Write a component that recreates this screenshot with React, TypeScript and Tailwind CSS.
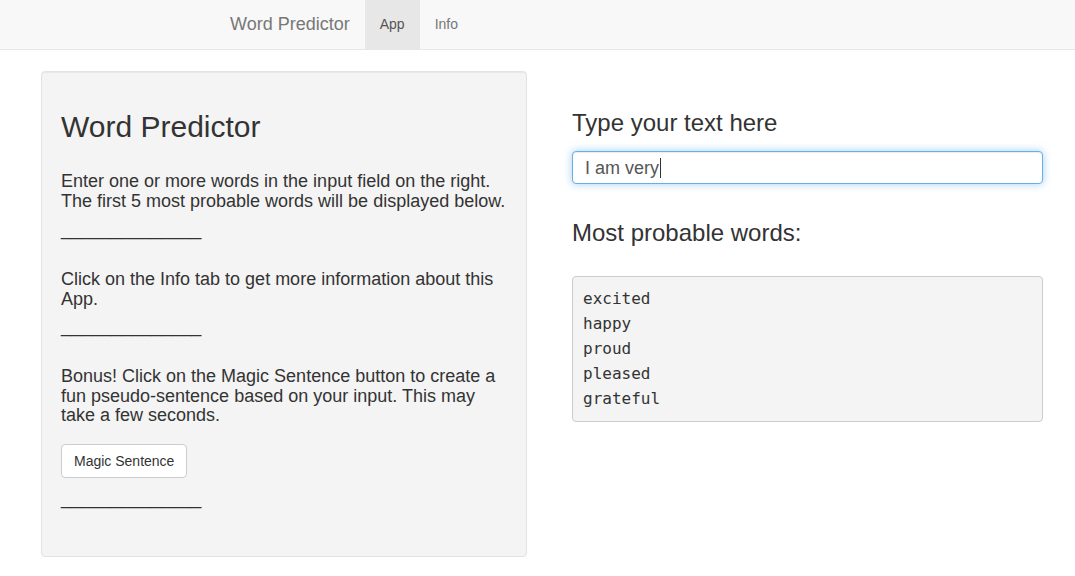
import React from "react";

export default function App() {
  const sans = { fontFamily: '"Liberation Sans", Arial, Helvetica, sans-serif' };
  return (
    <div className="min-h-[576px] w-[1075px] bg-white text-[#333]" style={sans}>
      <nav className="flex h-[50px] items-stretch border-b border-[#e7e7e7] bg-[#f8f8f8] pl-[230px]">
        <div className="flex items-center pr-[15px] pb-[1px] text-[18px] leading-[20px] text-[#777]">Word Predictor</div>
        <div className="flex items-center bg-[#e7e7e7] px-[15px] pb-[1px] text-[14px] leading-[20px] text-[#555]">App</div>
        <div className="flex items-center px-[15px] pb-[1px] text-[14px] leading-[20px] text-[#777]">Info</div>
      </nav>

      <div className="flex items-start pl-[41px] pt-[21px]">
        <div className="w-[486px] h-[486px] rounded-[4px] border border-[#e3e3e3] bg-[#f4f4f4] px-[19px] pt-[19px] shadow-[inset_0_1px_1px_rgba(0,0,0,0.05)]">
          <h2 className="mt-[19px] text-[30px] font-normal leading-[33px]">Word Predictor</h2>
          <p className="mt-[29px] whitespace-nowrap text-[18px] leading-[19.8px]">
            Enter one or more words in the input field on the right.
            <br />
            The first 5 most probable words will be displayed below.
          </p>
          <div className="mt-[8px] text-[18px] leading-[19.8px]">______________</div>
          <p className="mt-[31px] whitespace-nowrap text-[18px] leading-[19.8px]">
            Click on the Info tab to get more information about this
            <br />
            App.
          </p>
          <div className="mt-[7px] text-[18px] leading-[19.8px]">______________</div>
          <p className="mt-[30px] whitespace-nowrap text-[18px] leading-[19.8px]">
            Bonus! Click on the Magic Sentence button to create a
            <br />
            fun pseudo-sentence based on your input. This may
            <br />
            take a few seconds.
          </p>
          <button className="mt-[18px] h-[34px] rounded-[4px] border border-[#ccc] bg-white px-[12px] text-[14px] leading-[20px] text-[#333]">
            Magic Sentence
          </button>
          <div className="mt-[11px] text-[18px] leading-[19.8px]">______________</div>
        </div>

        <div className="ml-[45px] w-[471px]">
          <h3 className="mt-[39px] text-[24px] font-normal leading-[26.4px]">Type your text here</h3>
          <div className="mt-[15px] flex h-[33px] items-center rounded-[4px] border border-[#66afe9] bg-white px-[12px] pt-[1px] text-[18px] text-[#555] shadow-[inset_0_1px_1px_rgba(0,0,0,0.075),0_0_8px_rgba(102,175,233,0.6)]">
            <span>I am very</span>
            <span className="ml-[1px] inline-block h-[20px] w-px bg-[#333]" />
          </div>
          <h3 className="mt-[36px] text-[24px] font-normal leading-[26.4px]">Most probable words:</h3>
          <pre
            className="mt-[29px] rounded-[4px] border border-[#ccc] bg-[#f4f4f4] px-[10px] pt-[9px] pb-[10px] text-[16px] leading-[25px] text-[#333]"
            style={{ fontFamily: '"DejaVu Sans Mono", "Liberation Mono", monospace' }}
          >
            {"excited\nhappy\nproud\npleased\ngrateful"}
          </pre>
        </div>
      </div>
    </div>
  );
}
